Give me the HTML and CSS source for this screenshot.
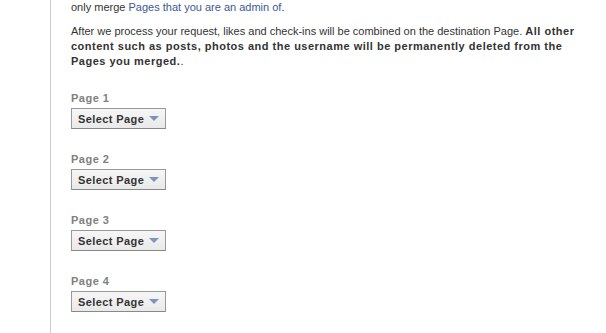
FILE: index.html
```
<!DOCTYPE html>
<html>
<head>
<meta charset="utf-8">
<link rel="stylesheet" href="styles.css">
</head>
<body>
<div class="main">
  <p class="intro">only merge <a class="link" href="#">Pages that you are an admin of</a>.</p>
  <p class="intro">After we process your request, likes and check-ins will be combined on the destination Page. <b>All other content such as posts, photos and the username will be permanently deleted from the Pages you merged.</b>.</p>
  <div class="field">
    <div class="label">Page 1</div>
    <button class="select"><span class="select-text">Select Page</span><span class="arrow"></span></button>
  </div>
  <div class="field">
    <div class="label">Page 2</div>
    <button class="select"><span class="select-text">Select Page</span><span class="arrow"></span></button>
  </div>
  <div class="field">
    <div class="label">Page 3</div>
    <button class="select"><span class="select-text">Select Page</span><span class="arrow"></span></button>
  </div>
  <div class="field">
    <div class="label">Page 4</div>
    <button class="select"><span class="select-text">Select Page</span><span class="arrow"></span></button>
  </div>
</div>
</body>
</html>
```
FILE: styles.css
```
html, body {
  margin: 0;
  padding: 0;
  background: #fff;
}
body {
  font-family: Tahoma, "Liberation Sans", Arial, sans-serif;
  font-size: 11px;
  color: #333;
  height: 333px;
  overflow: hidden;
}
.main {
  margin-left: 50px;
  border-left: 1px solid #cccccc;
  padding-left: 20px;
  min-height: 333px;
  width: 508px;
}
.intro {
  margin: 0 0 9px;
  line-height: 15px;
}
.intro b {
  font-weight: bold;
  letter-spacing: 0.5px;
}
.link {
  color: #3b5998;
  text-decoration: none;
}
.field {
  padding-top: 13px;
  height: 48px;
}
.label {
  color: #808080;
  font-weight: bold;
  letter-spacing: 0.5px;
  line-height: 15px;
  margin-bottom: 2px;
}
.select {
  display: inline-flex;
  align-items: center;
  height: 21px;
  box-sizing: border-box;
  padding: 0 6px 0 6px;
  border: 1px solid #999;
  border-bottom-color: #888;
  background: linear-gradient(#f6f6f6, #e9e9e9);
  font-family: inherit;
  font-size: 11px;
  font-weight: bold;
  letter-spacing: 0.4px;
  color: #333;
  cursor: pointer;
}
.arrow {
  margin-left: 5px;
  width: 0;
  height: 0;
  border-left: 5px solid transparent;
  border-right: 5px solid transparent;
  border-top: 5px solid #7f93bc;
}
```
